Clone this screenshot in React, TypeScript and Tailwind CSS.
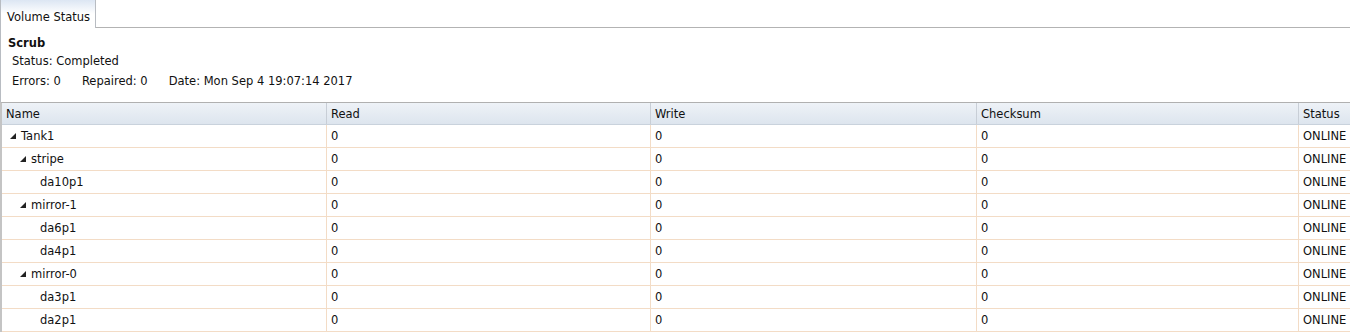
const rows = [
  { name: "Tank1", level: 0, open: true },
  { name: "stripe", level: 1, open: true },
  { name: "da10p1", level: 2 },
  { name: "mirror-1", level: 1, open: true },
  { name: "da6p1", level: 2 },
  { name: "da4p1", level: 2 },
  { name: "mirror-0", level: 1, open: true },
  { name: "da3p1", level: 2 },
  { name: "da2p1", level: 2 },
];

function Arrow() {
  return (
    <svg width="6" height="6" viewBox="0 0 6 6" className="shrink-0">
      <path d="M6 0 L6 6 L0 6 Z" fill="#222" />
    </svg>
  );
}

const cell = "border-r border-[#f3dcc6] px-[4px] flex items-center";
const cols = "grid-cols-[325px_324px_326px_322px_1fr]";

export default function App() {
  return (
    <div className="h-[332px] w-[1350px] overflow-hidden bg-white text-[11.5px] leading-[16px] text-[#111] font-['DejaVu_Sans',sans-serif]">
      {/* tab strip */}
      <div className="flex h-[28px] items-end">
        <div className="flex h-[28px] w-[96px] items-center border-r border-l border-[#b8bcc2] bg-gradient-to-b from-[#dce6f3] via-white to-white pl-[6px] pt-[5px]">
          Volume Status
        </div>
        <div className="h-full flex-1 border-b border-[#b3b3b3]" />
      </div>

      {/* scrub summary */}
      <div className="flex h-[74px] flex-col border-l border-[#b8bcc2] pl-[7px] pt-[7px]">
        <div className="font-bold">Scrub</div>
        <div className="mt-[2px] pl-[4px]">Status: Completed</div>
        <div className="mt-[4px] flex gap-[21px] pl-[4px]">
          <span>Errors: 0</span>
          <span>Repaired: 0</span>
          <span>Date: Mon Sep 4 19:07:14 2017</span>
        </div>
      </div>

      {/* grid */}
      <div className="border-l-2 border-t border-l-[#c4c4c4] border-t-[#b0b0b0]">
        <div className={`grid h-[22px] ${cols} border-b border-[#c9d2dc] bg-gradient-to-b from-[#eef2f7] to-[#dde5ee]`}>
          {["Name", "Read", "Write", "Checksum", "Status"].map((h, i) => (
            <div key={h} className={`flex items-center px-[4px] ${i < 4 ? "border-r border-[#c8ced6]" : ""}`}>
              {h}
            </div>
          ))}
        </div>
        {rows.map((r) => (
          <div key={r.name} className={`grid h-[23px] ${cols} border-b border-[#f3dcc6]`}>
            <div className={cell}>
              <div className={`flex items-center gap-[5px] ${r.level === 0 ? "pl-[4px]" : r.level === 1 ? "pl-[14px]" : "pl-[34px]"}`}>
                {r.open && <Arrow />}
                <span>{r.name}</span>
              </div>
            </div>
            <div className={cell}>0</div>
            <div className={cell}>0</div>
            <div className={cell}>0</div>
            <div className="flex items-center px-[4px]">ONLINE</div>
          </div>
        ))}
      </div>
    </div>
  );
}
